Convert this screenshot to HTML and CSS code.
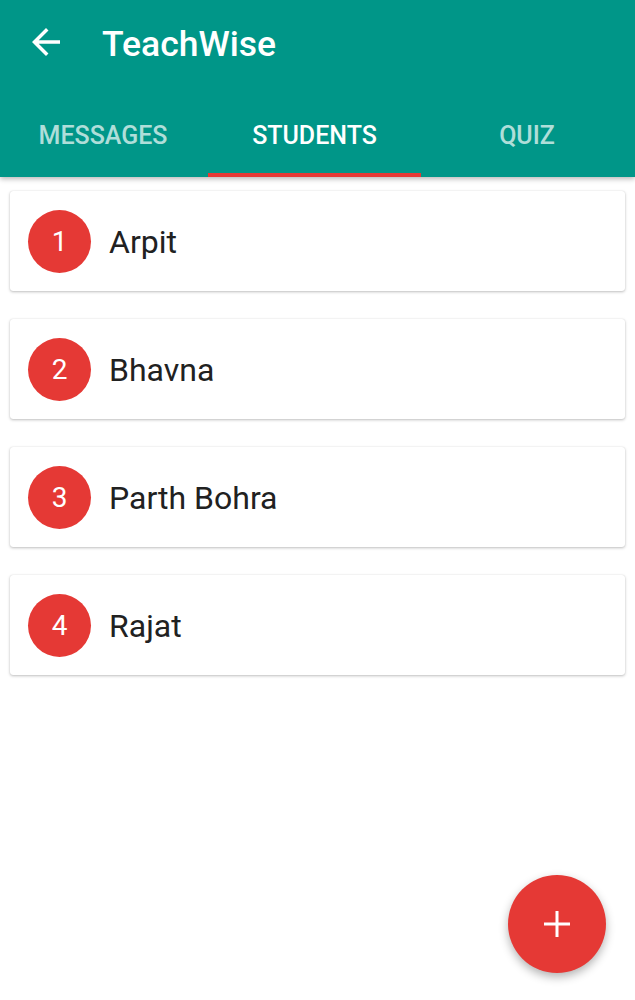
FILE: index.html
```html
<!DOCTYPE html>
<html>
<head>
<meta charset="utf-8">
<link rel="stylesheet" href="styles.css">
</head>
<body>
<header class="appbar">
  <div class="toolbar">
    <svg class="back" viewBox="0 0 24 24"><path d="M20 11H7.83l5.59-5.59L12 4l-8 8 8 8 1.41-1.41L7.83 13H20v-2z" fill="#fff"/></svg>
    <h1 class="title">TeachWise</h1>
  </div>
  <nav class="tabs">
    <div class="tab">MESSAGES</div>
    <div class="tab active">STUDENTS</div>
    <div class="tab">QUIZ</div>
  </nav>
</header>
<main class="list">
  <div class="card"><div class="badge">1</div><div class="name">Arpit</div></div>
  <div class="card"><div class="badge">2</div><div class="name">Bhavna</div></div>
  <div class="card"><div class="badge">3</div><div class="name">Parth Bohra</div></div>
  <div class="card"><div class="badge">4</div><div class="name">Rajat</div></div>
</main>
<button class="fab"><svg viewBox="0 0 26 26"><path d="M11.5 0h3v11.5H26v3H14.5V26h-3V14.5H0v-3h11.5z" fill="#fff"/></svg></button>
</body>
</html>
```
FILE: styles.css
```css
* { box-sizing: border-box; }
html, body { margin: 0; padding: 0; background: #fff; }
body { font-family: Roboto, "Noto Sans", sans-serif; width: 635px; height: 1000px; overflow: hidden; }
.appbar { background: #009688; box-shadow: 0 2px 5px rgba(0,0,0,0.28); position: relative; z-index: 1; }
.toolbar { height: 90px; display: flex; align-items: center; }
.back { width: 42px; height: 42px; margin-left: 25px; margin-top: -6px; }
.title { margin: 0 0 0 35px; color: #fff; font-size: 35.5px; font-weight: 500; margin-top: -2px; }
.tabs { display: grid; grid-template-columns: 206px 213px 1fr; height: 87px; }
.tab { display: flex; align-items: center; justify-content: center; color: rgba(255,255,255,0.7); font-size: 25px; font-weight: 500; padding-top: 8px; border-bottom: 4px solid transparent; }
.tab:nth-child(2) { margin-left: 2px; margin-right: -2px; }
.tab.active { color: #fff; border-bottom-color: #e53935; }
.list { display: flex; flex-direction: column; gap: 28px; padding: 14px 10px 0; }
.card { height: 100px; background: #fff; border-radius: 3px; box-shadow: 0 1px 3px rgba(0,0,0,0.25), 0 0 1px rgba(0,0,0,0.15); display: flex; align-items: center; padding-left: 18px; }
.badge { width: 63px; height: 63px; border-radius: 50%; background: #e53935; color: #fff; font-size: 28px; display: flex; align-items: center; justify-content: center; }
.name { margin-left: 18px; font-size: 32px; color: #212121; padding-top: 2px; }
.fab { position: fixed; right: 29px; bottom: 27px; width: 98px; height: 98px; border-radius: 50%; border: none; background: #e53935; box-shadow: 0 4px 10px rgba(0,0,0,0.3); display: flex; align-items: center; justify-content: center; padding: 0; }
.fab svg { width: 26px; height: 26px; }
```
